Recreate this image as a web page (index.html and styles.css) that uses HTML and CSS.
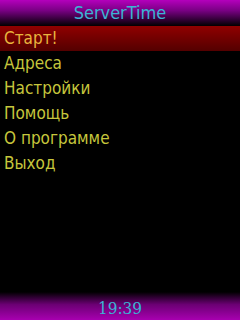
FILE: index.html
```html
<!DOCTYPE html>
<html lang="ru">
<head>
  <meta charset="UTF-8">
  <meta name="viewport" content="width=device-width, initial-scale=1.0">
  <title>ServerTime</title>
  <link rel="stylesheet" href="styles.css">
</head>
<body>
  <div class="screen">
    <header class="title-bar">ServerTime</header>

    <ul class="menu">
      <li class="menu-item selected">Старт!</li>
      <li class="menu-item">Адреса</li>
      <li class="menu-item">Настройки</li>
      <li class="menu-item">Помощь</li>
      <li class="menu-item">О программе</li>
      <li class="menu-item">Выход</li>
    </ul>

    <footer class="clock-bar">19:39</footer>
  </div>
</body>
</html>
```

FILE: styles.css
```css
/* General Styling */
body {
  margin: 0;
  background: #000;
  font-family: 'DejaVu Sans Condensed', 'DejaVu Sans', sans-serif;
}

.screen {
  width: 240px;
  height: 320px;
  display: flex;
  flex-direction: column;
  background: #000;
  overflow: hidden;
}

.title-bar {
  height: 26px;
  line-height: 26px;
  text-align: center;
  font-size: 18px;
  color: #3cb4d4;
  background: linear-gradient(to bottom, #b400bc, #7a0084 40%, #000 100%);
}

.menu {
  list-style: none;
  margin: 0;
  padding: 0;
  flex: 1;
}

.menu-item {
  height: 25px;
  line-height: 25px;
  padding-left: 4px;
  font-size: 17px;
  color: #c6c63c;
}

.menu-item.selected {
  color: #e8b43e;
  background: linear-gradient(to bottom, #900000, #540000);
}

.clock-bar {
  height: 28px;
  line-height: 32px;
  text-align: center;
  font-family: 'DejaVu Serif Condensed', 'DejaVu Serif', serif;
  font-size: 17px;
  color: #3cb4d4;
  background: linear-gradient(to bottom, #000, #6c0074 45%, #a800b0 100%);
}
```
